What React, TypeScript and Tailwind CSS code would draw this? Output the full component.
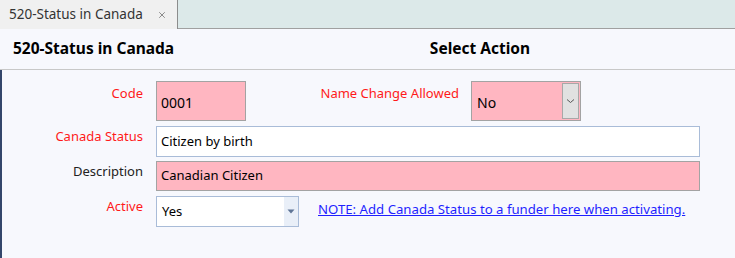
import { X } from "lucide-react";

const font = { fontFamily: '"Segoe UI", "Noto Sans", "Open Sans", sans-serif' };

export default function App() {
  return (
    <div className="w-[735px] h-[258px] flex flex-col bg-[#f7f8fd] text-[13px] text-black overflow-hidden" style={font}>
      {/* tab strip */}
      <div className="flex h-[29px] bg-[#dce9e9]">
        <div className="w-[178px] flex items-center justify-between pl-[9px] pr-[10px] bg-[#f0f0f0] border-r border-[#8c8c8c] text-[#333] text-[13.5px]">
          <span>520-Status in Canada</span>
          <X size={10} strokeWidth={2} className="text-[#777]" />
        </div>
        <div className="flex-1 border-b border-[#a0a0a0]" />
      </div>

      {/* header */}
      <div className="flex items-center h-[41px] border-b border-[#c8c8c8] font-bold text-[15.5px]">
        <div className="w-[320px] pl-[13px]">520-Status in Canada</div>
        <div className="w-[320px] text-center">Select Action</div>
      </div>

      {/* form */}
      <div className="flex-1 flex flex-col border-l-2 border-[#34466b] pt-[11px] gap-[5px]">
        <div className="flex items-start">
          <div className="w-[141px] text-right pt-[3px] text-[#ff1a1a]">Code</div>
          <div className="ml-[13px] w-[90px] h-[40px] bg-[#ffb6c1] border border-[#a3a3a3] flex items-center pl-[4px] pt-[3px] text-[14px]">0001</div>
          <div className="w-[213px] text-right pt-[3px] text-[#ff1a1a]">Name Change Allowed</div>
          <div className="ml-[12px] w-[110px] h-[40px] bg-[#ffb6c1] border border-[#a3a3a3] flex items-center p-[1px]">
            <span className="flex-1 pl-[4px] pt-[3px] text-[14px]">No</span>
            <div className="w-[17px] h-full bg-[#e1e1e1] border border-[#a8a8a8] flex items-center justify-center">
              <svg width="9" height="6" viewBox="0 0 9 6"><path d="M1 1.5 L4.5 4.5 L8 1.5" fill="none" stroke="#555" strokeWidth="1" /></svg>
            </div>
          </div>
        </div>

        <div className="flex items-start">
          <div className="w-[141px] text-right pt-[1px] text-[#ff1a1a]">Canada Status</div>
          <div className="ml-[13px] w-[544px] h-[31px] bg-white border border-[#a9bcd8] flex items-center pl-[4px]">Citizen by birth</div>
        </div>

        <div className="flex items-start mt-[-1px]">
          <div className="w-[141px] text-right pt-[1px] text-[#222]">Description</div>
          <div className="ml-[13px] w-[544px] h-[30px] bg-[#ffb6c1] border border-[#a3a3a3] flex items-center pl-[4px]">Canadian Citizen</div>
        </div>

        <div className="flex items-start">
          <div className="w-[141px] text-right pt-[1px] text-[#ff1a1a]">Active</div>
          <div className="ml-[13px] w-[143px] h-[31px] bg-white border border-[#a9bcd8] flex">
            <span className="flex-1 flex items-center pl-[5px]">Yes</span>
            <div className="w-[14px] bg-[#e9eff8] flex items-center justify-center">
              <svg width="8" height="5" viewBox="0 0 8 5"><path d="M0.5 0.5 H7.5 L4 4.5 Z" fill="#5f7596" /></svg>
            </div>
          </div>
          <a className="ml-[19px] pt-[4px] text-[#1f1fff] underline text-[13.2px]">NOTE: Add Canada Status to a funder here when activating.</a>
        </div>
      </div>
    </div>
  );
}
